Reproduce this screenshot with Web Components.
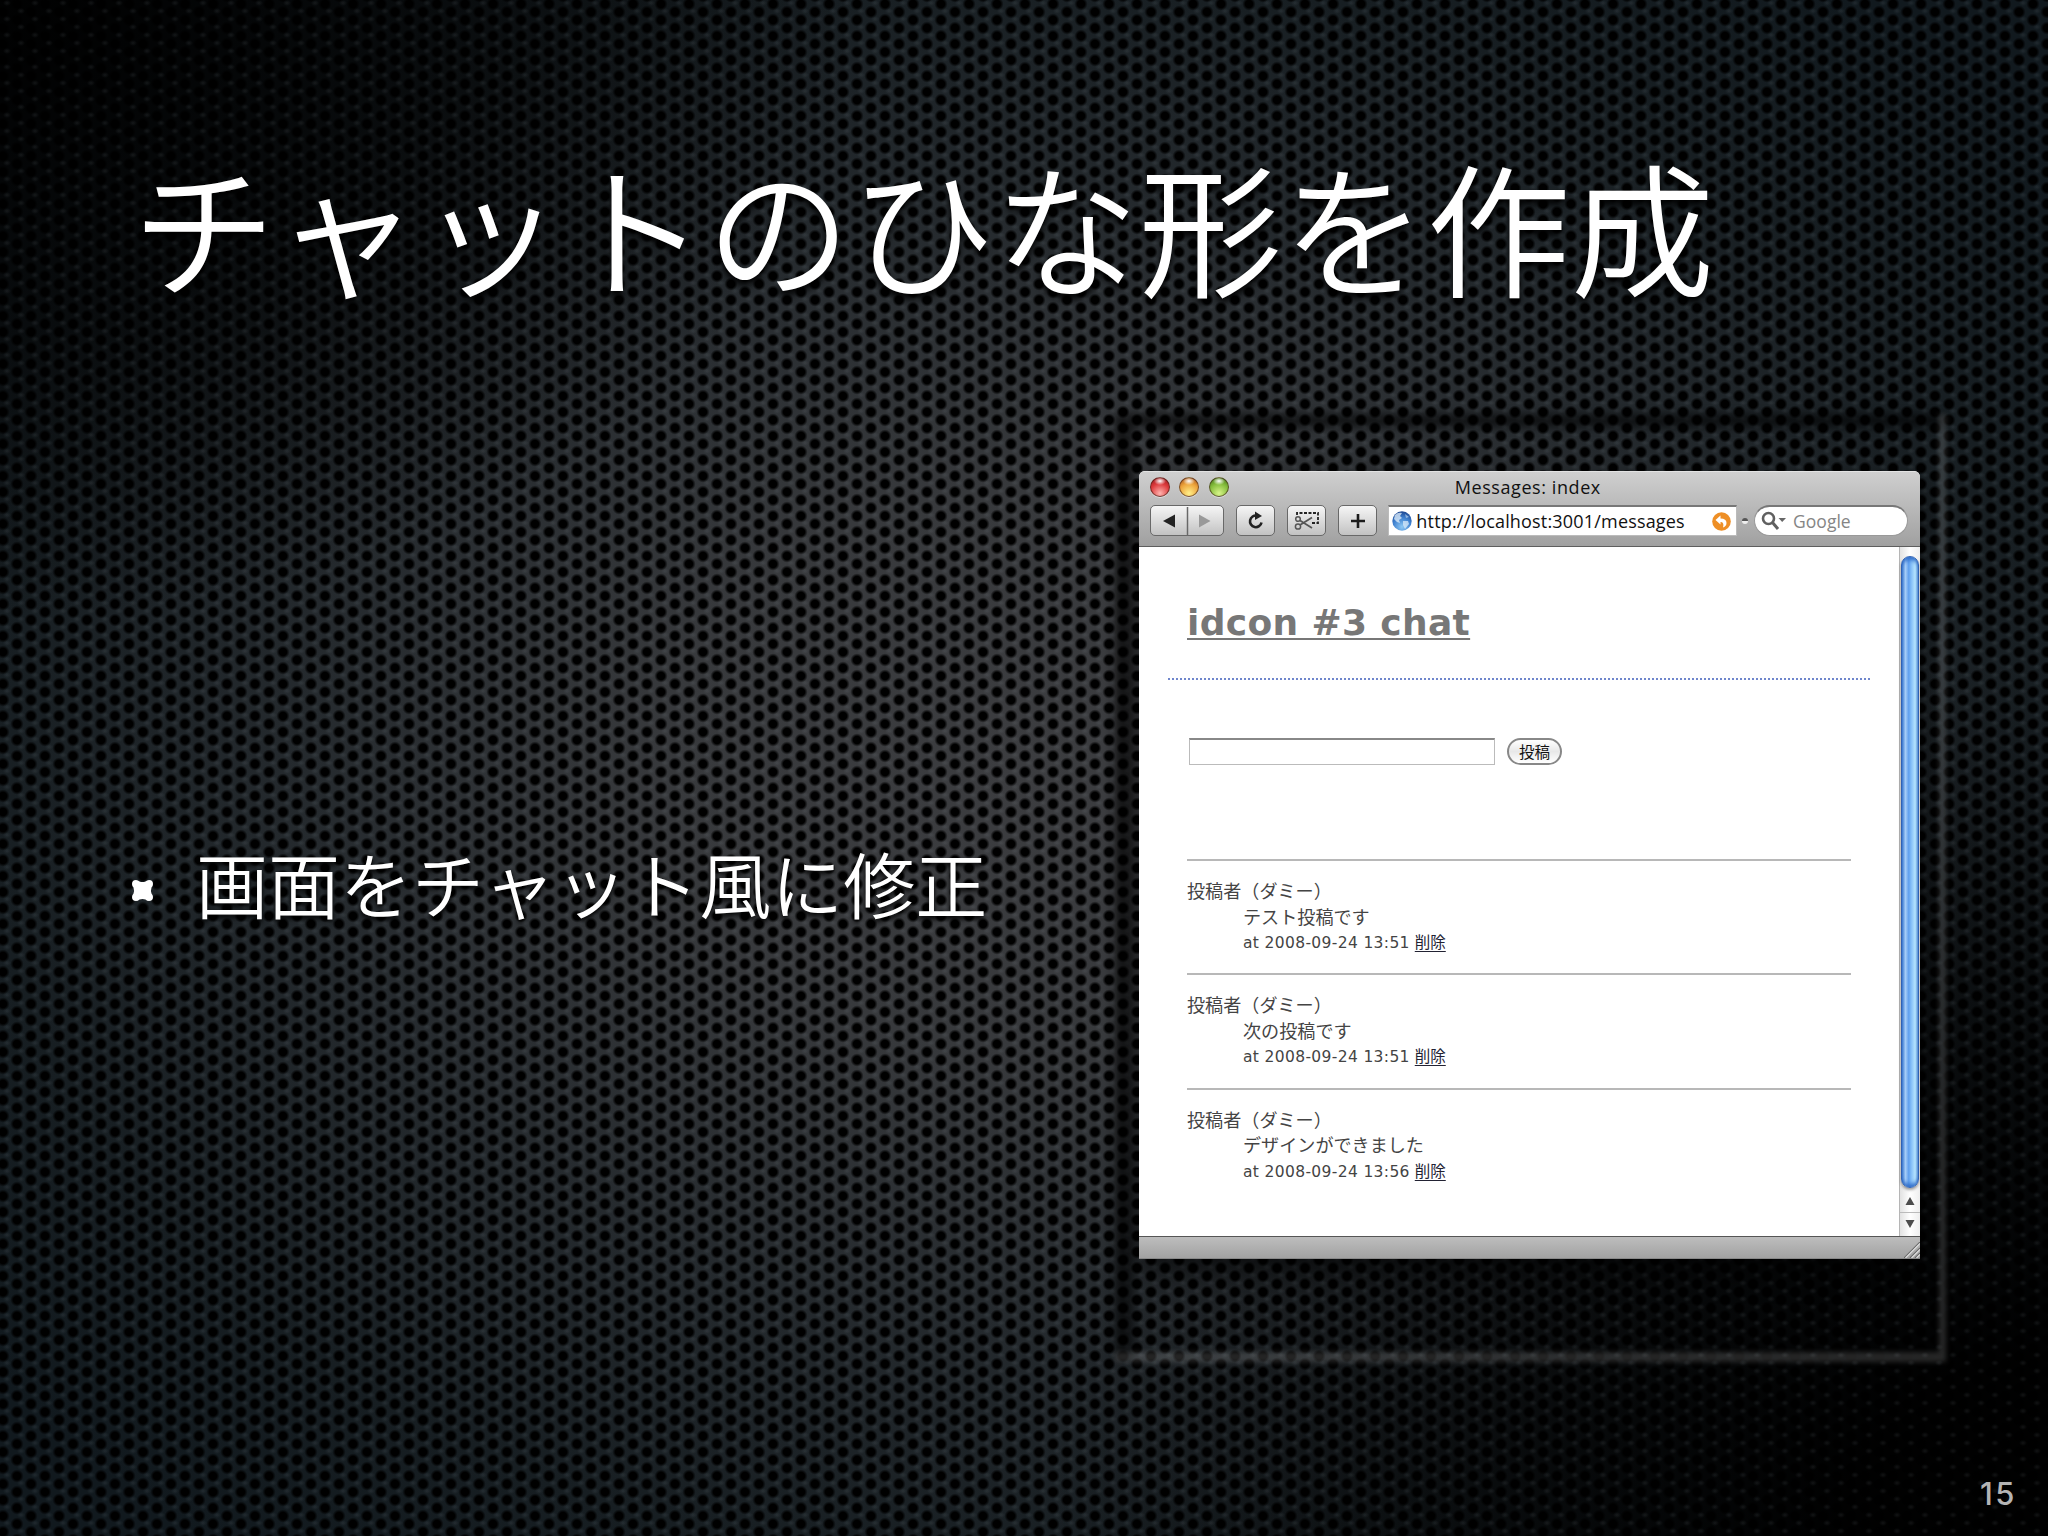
<!DOCTYPE html>
<html lang="ja">
<head>
<meta charset="utf-8">
<title>チャットのひな形を作成</title>
<style>
  html, body {
    margin: 0;
    padding: 0;
    background: #000;
  }
</style>
</head>
<body>
<slide-page>
  <slide-title slot="title">チャットのひな形を作成</slide-title>
  <slide-bullet slot="body">画面をチャット風に修正</slide-bullet>
  <photo-frame slot="figure">
    <browser-window>
      <browser-toolbar slot="toolbar" name="Messages: index" url="http://localhost:3001/messages"></browser-toolbar>
      <chat-page>
        <chat-message author="投稿者（ダミー）" date="at 2008-09-24 13:51">テスト投稿です</chat-message>
        <chat-message author="投稿者（ダミー）" date="at 2008-09-24 13:51">次の投稿です</chat-message>
        <chat-message author="投稿者（ダミー）" date="at 2008-09-24 13:56">デザインができました</chat-message>
      </chat-page>
      <scroll-bar slot="scroll"></scroll-bar>
    </browser-window>
  </photo-frame>
  <span slot="number">15</span>
</slide-page>

<script>
class SlidePage extends HTMLElement {
  constructor() {
    super();
    this.attachShadow({mode: "open"});
  }

  connectedCallback() {
    this.shadowRoot.innerHTML = `
    <style>
      * { box-sizing: border-box; }
      :host {
        display: grid;
        grid-template-columns: 1118px 1fr;
        grid-template-rows: 414px 948px 1fr;
        width: 2048px;
        height: 1536px;
        overflow: hidden;
        color: #fff;
        font-family: "Noto Sans CJK JP", sans-serif;
        background:
          radial-gradient(ellipse 4px 3px at 50% 50%, rgba(190,205,215,.09), rgba(190,205,215,0)) 931px 947px / 28px 16px,
          radial-gradient(ellipse 4px 3px at 50% 50%, rgba(190,205,215,.09), rgba(190,205,215,0)) 945px 955px / 28px 16px,
          radial-gradient(ellipse 860px 620px at 0 0, rgba(0,0,0,.92) 10%, rgba(0,0,0,.55) 55%, rgba(0,0,0,0) 100%),
          radial-gradient(ellipse 1000px 880px at 100% 100%, rgba(0,0,0,.97) 20%, rgba(0,0,0,.62) 55%, rgba(0,0,0,0) 100%),
          radial-gradient(circle at 50% 50%, #000 0, #000 3.700px, rgba(0,0,0,0) 6.600px) 927px 940px / 28px 16px,
          radial-gradient(circle at 50% 50%, #000 0, #000 3.700px, rgba(0,0,0,0) 6.600px) 941px 948px / 28px 16px,
          radial-gradient(ellipse 1300px 1000px at 50% 50%, #3c3d40 0%, #37393c 28%, #252a2e 55%, #171e22 80%, #11191e 100%);
      }
      .title {
        grid-column: 1 / 3;
        padding: 139px 0 0 132px;
      }
      .body {
        display: flex;
        align-items: center;
        padding-left: 132px;
      }
      .number {
        grid-column: 1 / 3;
        display: flex;
        justify-content: flex-end;
        align-items: flex-end;
        padding: 0 31px 22px 0;
        color: #b4b4b4;
        font: 500 31px/40px Inter, "Liberation Sans", sans-serif;
        letter-spacing: 2.500px;
      }
    </style>
    <div class="title"><slot name="title"></slot></div>
    <div class="body"><slot name="body"></slot></div>
    <slot name="figure"></slot>
    <div class="number"><slot name="number"></slot></div>`;
  }
}

class SlideTitle extends HTMLElement {
  constructor() {
    super();
    this.attachShadow({mode: "open"});
  }

  connectedCallback() {
    this.shadowRoot.innerHTML = `
    <style>
      :host {
        display: block;
        font-size: 144px;
        font-weight: 350;
        line-height: 170px;
        white-space: nowrap;
        text-shadow: 0 5px 7px #000;
      }
    </style>
    <slot></slot>`;
  }
}

class SlideBullet extends HTMLElement {
  constructor() {
    super();
    this.attachShadow({mode: "open"});
  }

  connectedCallback() {
    this.shadowRoot.innerHTML = `
    <style>
      :host {
        display: flex;
        align-items: center;
        gap: 43px;
        margin-top: -12px;
        font-size: 72px;
        font-weight: 350;
        line-height: 90px;
        white-space: nowrap;
        text-shadow: 0 3px 5px #000;
      }
      svg { flex: none; margin-top: 16px; }
    </style>
    <svg width="21" height="21" viewBox="0 0 21 21" fill="#fff">
      <path d="M4 0Q6 0 7.500 1.500Q10.500 2.500 13.500 1.500Q15 0 17 0Q21 0 21 4Q21 6 19.500 7.500Q18.500 10.500 19.500 13.500Q21 15 21 17Q21 21 17 21Q15 21 13.500 19.500Q10.500 18.500 7.500 19.500Q6 21 4 21Q0 21 0 17Q0 15 1.500 13.500Q2.500 10.500 1.500 7.500Q0 6 0 4Q0 0 4 0Z"/>
    </svg>
    <span><slot></slot></span>`;
  }
}

class PhotoFrame extends HTMLElement {
  constructor() {
    super();
    this.attachShadow({mode: "open"});
  }

  connectedCallback() {
    this.shadowRoot.innerHTML = `
    <style>
      :host {
        display: block;
        position: relative;
        box-sizing: border-box;
        width: 828px;
        height: 948px;
        padding: 57px 0 0 21px;
      }
      /* sunken edge, dark above and left, lit below and right */
      .dark, .light {
        position: absolute;
        inset: 0 0 0 -3px;
        border: 0 solid rgba(0,0,0,.6);
        border-width: 13px 0 0 18px;
        filter: blur(4px);
      }
      .light {
        border-color: rgba(255,255,255,.15);
        border-width: 0 7px 10px 0;
        filter: blur(2.500px);
      }
    </style>
    <div class="dark"></div>
    <div class="light"></div>
    <slot></slot>`;
  }
}

class BrowserWindow extends HTMLElement {
  constructor() {
    super();
    this.attachShadow({mode: "open"});
  }

  connectedCallback() {
    this.shadowRoot.innerHTML = `
    <style>
      :host {
        display: flex;
        position: relative;
        flex-direction: column;
        width: 781px;
        height: 788px;
        border-radius: 6px 6px 0 0;
        overflow: hidden;
        background: #fff;
        box-shadow: 0 12px 28px 0 rgba(0,0,0,.65);
      }
      .view {
        display: flex;
        flex: 1;
      }
      .page { flex: 1; }
      .status {
        display: flex;
        justify-content: flex-end;
        align-items: flex-end;
        box-sizing: border-box;
        height: 23px;
        border-top: 1px solid #555;
        border-bottom: 1px solid #888;
        background: linear-gradient(#bdbdbd, #a2a2a2);
      }
    </style>
    <slot name="toolbar"></slot>
    <div class="view">
      <div class="page"><slot></slot></div>
      <slot name="scroll"></slot>
    </div>
    <div class="status">
      <svg width="16" height="16" viewBox="0 0 16 16" stroke-width="1.200">
        <path d="M0 16L16 0M6 16L16 6M11 16L16 11" stroke="#666"/>
        <path d="M1.500 16L16 1.500M7.500 16L16 7.500M12.500 16L16 12.500" stroke="#ddd"/>
      </svg>
    </div>`;
  }
}

class BrowserToolbar extends HTMLElement {
  constructor() {
    super();
    this.attachShadow({mode: "open"});
  }

  connectedCallback() {
    this.shadowRoot.innerHTML = `
    <style>
      * { box-sizing: border-box; }
      :host {
        display: block;
        box-sizing: border-box;
        height: 76px;
        padding: 5px 12px 0 10.500px;
        color: #111;
        font-family: "Open Sans", "Noto Sans", sans-serif;
        border-top: 1px solid #e2e2e2;
        border-bottom: 1px solid #5e5e5e;
        background: linear-gradient(#cfcfcf, #a0a0a0);
      }
      .titlebar {
        display: grid;
        grid-template-columns: 90px 1fr 90px;
        height: 20px;
      }
      .lights {
        display: flex;
        gap: 9.700px;
      }
      .lights i {
        width: 20px;
        height: 20px;
        border: 1px solid rgba(60,30,20,.6);
        border-radius: 50%;
        background:
          radial-gradient(ellipse 6px 4px at 50% 17%, #fff, rgba(255,255,255,0)),
          radial-gradient(circle at 50% 85%, var(--glow) 0, var(--tone) 55%, var(--rim) 100%);
        box-shadow: 0 1px 0 rgba(255,255,255,.5);
      }
      .name {
        font-size: 18px;
        line-height: 21px;
        text-align: center;
        letter-spacing: .58px;
        margin-left: -2px;
      }
      .tools {
        display: flex;
        align-items: center;
        height: 31px;
        margin-top: 8px;
      }
      .button {
        display: flex;
        align-items: center;
        justify-content: center;
        width: 39px;
        height: 31px;
        border: 1.500px solid #686868;
        border-radius: 5px;
        background: linear-gradient(#f6f6f6, #c2c2c2);
        margin-right: 12px;
      }
      .pair { width: 75px; }
      .pair svg { flex: none; }
      .address {
        display: flex;
        align-items: center;
        width: 349px;
        height: 31px;
        margin-left: -1px;
        padding: 0 5px 0 3px;
        border: 1px solid #bbb;
        border-top: 2px solid #777;
        background: #fff;
        font-size: 18px;
        white-space: nowrap;
      }
      .address span {
        flex: 1;
        margin-left: 4px;
        letter-spacing: .18px;
      }
      .grip {
        width: 6px;
        height: 6px;
        margin: 0 6px 0 5px;
        border-radius: 50%;
        background: linear-gradient(#555 45%, #eee 55%);
      }
      .search {
        display: flex;
        align-items: center;
        width: 154px;
        height: 31px;
        padding-left: 6px;
        border: 1px solid #999;
        border-top: 2px solid #777;
        border-radius: 16px;
        background: #fff;
        color: #858585;
        font-size: 17.500px;
      }
      .search span { margin-left: 6px; }
    </style>
    <div class="titlebar">
      <div class="lights">
        <i style="--glow:#ffb5b0;--tone:#dd3a3c;--rim:#8e1418"></i>
        <i style="--glow:#fff08a;--tone:#eda43c;--rim:#9c4a18"></i>
        <i style="--glow:#d8f58a;--tone:#85bd3c;--rim:#3c6a14"></i>
      </div>
      <div class="name"></div>
    </div>
    <div class="tools">
      <div class="button pair">
        <svg width="72" height="28" viewBox="0 0 72 28">
          <path d="M36.500 0V28" stroke="#686868" stroke-width="1.500"/>
          <path d="M12 14L24 7.500V20.500Z" fill="#222"/>
          <path d="M59.500 14L48 7.500V20.500Z" fill="#999"/>
        </svg>
      </div>
      <div class="button">
        <svg width="18" height="20" viewBox="0 0 18 20">
          <path d="M10 4.700A5.800 5.800 0 1 0 14.500 11.500" fill="none" stroke="#222" stroke-width="2.600"/>
          <path d="M8 .5L15 5L8 9Z" fill="#222"/>
        </svg>
      </div>
      <div class="button">
        <svg width="26" height="20" viewBox="0 0 26 20" fill="none">
          <path d="M3 4V2H24V12H18" stroke="#222" stroke-width="1.800" stroke-dasharray="3 1.500"/>
          <circle cx="4" cy="8" r="2.300" stroke="#555" stroke-width="1.500"/>
          <circle cx="4" cy="15.500" r="2.600" stroke="#555" stroke-width="1.500"/>
          <path d="M6 9.500L18 17M6 14L18 6.500" stroke="#555" stroke-width="1.800"/>
        </svg>
      </div>
      <div class="button">
        <svg width="16" height="16" viewBox="0 0 16 16"><path d="M8 1V15M1 8H15" stroke="#1c1c1c" stroke-width="2.600"/></svg>
      </div>
      <div class="address">
        <svg width="20" height="20" viewBox="0 0 20 20">
          <defs><radialGradient id="sea" cx=".5" cy=".8" r=".8"><stop offset="0" stop-color="#8ec9f5"/><stop offset=".6" stop-color="#3d7fce"/><stop offset="1" stop-color="#1c458f"/></radialGradient></defs>
          <circle cx="10" cy="10" r="9.700" fill="url(#sea)"/>
          <path d="M3 4Q6 1 10 2L8 5L10 7L7 9L8 12L5 11L2 8Z" fill="#e3f0fb" opacity=".75"/>
          <path d="M11 10L16 10L17 13L13 18L11 14Z" fill="#e3f0fb" opacity=".7"/>
          <path d="M13 3L17 6L14 7Z" fill="#cde4f8" opacity=".6"/>
        </svg>
        <span></span>
        <svg width="19" height="19" viewBox="0 0 19 19">
          <circle cx="9.500" cy="9.500" r="9.300" fill="#ee8f26"/>
          <path d="M3.500 8L8.500 3.500V6.500Q14.500 6.500 14.500 11Q14.500 14 11 15.500Q12.500 10 8.500 10V12.500Z" fill="#fff"/>
        </svg>
      </div>
      <div class="grip"></div>
      <div class="search">
        <svg width="26" height="20" viewBox="0 0 26 20">
          <circle cx="7.500" cy="7.500" r="5.500" fill="none" stroke="#606060" stroke-width="2.600"/>
          <path d="M11.500 11.500L17 18" stroke="#606060" stroke-width="3"/>
          <path d="M17.500 7H25L21.200 11Z" fill="#666"/>
        </svg>
        <span>Google</span>
      </div>
    </div>`;
    this.shadowRoot.querySelector(".name").textContent = this.getAttribute("name");
    this.shadowRoot.querySelector(".address span").textContent = this.getAttribute("url");
  }
}

class ScrollBar extends HTMLElement {
  constructor() {
    super();
    this.attachShadow({mode: "open"});
  }

  connectedCallback() {
    this.shadowRoot.innerHTML = `
    <style>
      :host {
        display: flex;
        flex-direction: column;
        align-items: center;
        box-sizing: border-box;
        width: 21px;
        padding-top: 9px;
        border-left: 1px solid #b5b5b5;
        background: linear-gradient(90deg, #e2e2e2, #fff 50%, #eee);
      }
      .thumb {
        flex: 1;
        box-sizing: border-box;
        width: 18px;
        border: 1px solid #2f62b4;
        border-radius: 9px;
        background: linear-gradient(90deg, #3b78cf 0, #a5cdf8 22%, #5f9fee 42%, #7fbaf6 55%, #b5e4ff 82%, #5b94d5 100%);
        box-shadow: 0 2px 3px rgba(0,0,0,.4), inset 0 6px 4px -3px #2f6cc8, inset 0 -6px 4px -3px #2f6cc8;
      }
      svg { display: block; }
    </style>
    <div class="thumb"></div>
    <svg width="20" height="48" viewBox="0 0 20 48">
      <path d="M0 24.500H20" stroke="#bbb"/>
      <path d="M5.500 17H14.500L10 9ZM5.500 32H14.500L10 40Z" fill="#4c4c4c"/>
    </svg>`;
  }
}

class ChatPage extends HTMLElement {
  constructor() {
    super();
    this.attachShadow({mode: "open"});
  }

  connectedCallback() {
    this.shadowRoot.innerHTML = `
    <style>
      :host {
        display: block;
        padding: 51px 29px 0;
        color: #444;
        font-family: "DejaVu Sans", "Noto Sans CJK JP", sans-serif;
      }
      h1 {
        margin: 0;
        padding: 0 0 30px 19px;
        border-bottom: 2px dotted #6f86cc;
        font-size: 36px;
        line-height: 50px;
        letter-spacing: .35px;
      }
      a {
        color: #777;
        text-decoration: underline;
        text-decoration-thickness: 2px;
        text-underline-offset: 3px;
        text-decoration-skip-ink: none;
      }
      form {
        display: flex;
        gap: 12px;
        margin: 58px 0 94px 21px;
      }
      input {
        box-sizing: border-box;
        width: 306px;
        height: 27px;
        padding: 0;
        border: 1px solid #bbb;
        border-top: 2px solid #888;
        border-radius: 0;
        background: #fff;
      }
      button {
        width: 55px;
        height: 27px;
        padding: 0 0 2px;
        border: 2px solid #888;
        border-radius: 14px;
        background: linear-gradient(#fff, #e8e8e8 50%, #fff);
        color: #111;
        font: 15.500px/20px "Noto Sans CJK JP", sans-serif;
      }
      .list { margin: 0 19px; }
    </style>
    <h1><a>idcon #3 chat</a></h1>
    <form>
      <input type="text">
      <button type="button">投稿</button>
    </form>
    <div class="list"><slot></slot></div>`;
  }
}

class ChatMessage extends HTMLElement {
  constructor() {
    super();
    this.attachShadow({mode: "open"});
  }

  connectedCallback() {
    this.shadowRoot.innerHTML = `
    <style>
      :host {
        display: block;
        box-sizing: border-box;
        height: 114.300px;
        padding-top: 18px;
        border-top: 2px solid #b8b8b8;
        font-size: 18.100px;
        line-height: 25.500px;
      }
      dl, dd { margin: 0; }
      dt, dd { height: 25.500px; white-space: nowrap; }
      dd { padding-left: 56px; }
      .date { padding-top: 1px; font-size: 15.500px; }
      .date span { letter-spacing: .35px; }
      a { color: #223; text-decoration: underline; text-underline-offset: 3px; }
    </style>
    <dl>
      <dt></dt>
      <dd><slot></slot></dd>
      <dd class="date"><span></span> <a>削除</a></dd>
    </dl>`;
    this.shadowRoot.querySelector("dt").textContent = this.getAttribute("author");
    this.shadowRoot.querySelector(".date span").textContent = this.getAttribute("date");
  }
}

customElements.define("slide-page", SlidePage);
customElements.define("slide-title", SlideTitle);
customElements.define("slide-bullet", SlideBullet);
customElements.define("photo-frame", PhotoFrame);
customElements.define("browser-window", BrowserWindow);
customElements.define("browser-toolbar", BrowserToolbar);
customElements.define("scroll-bar", ScrollBar);
customElements.define("chat-page", ChatPage);
customElements.define("chat-message", ChatMessage);
</script>
</body>
</html>
